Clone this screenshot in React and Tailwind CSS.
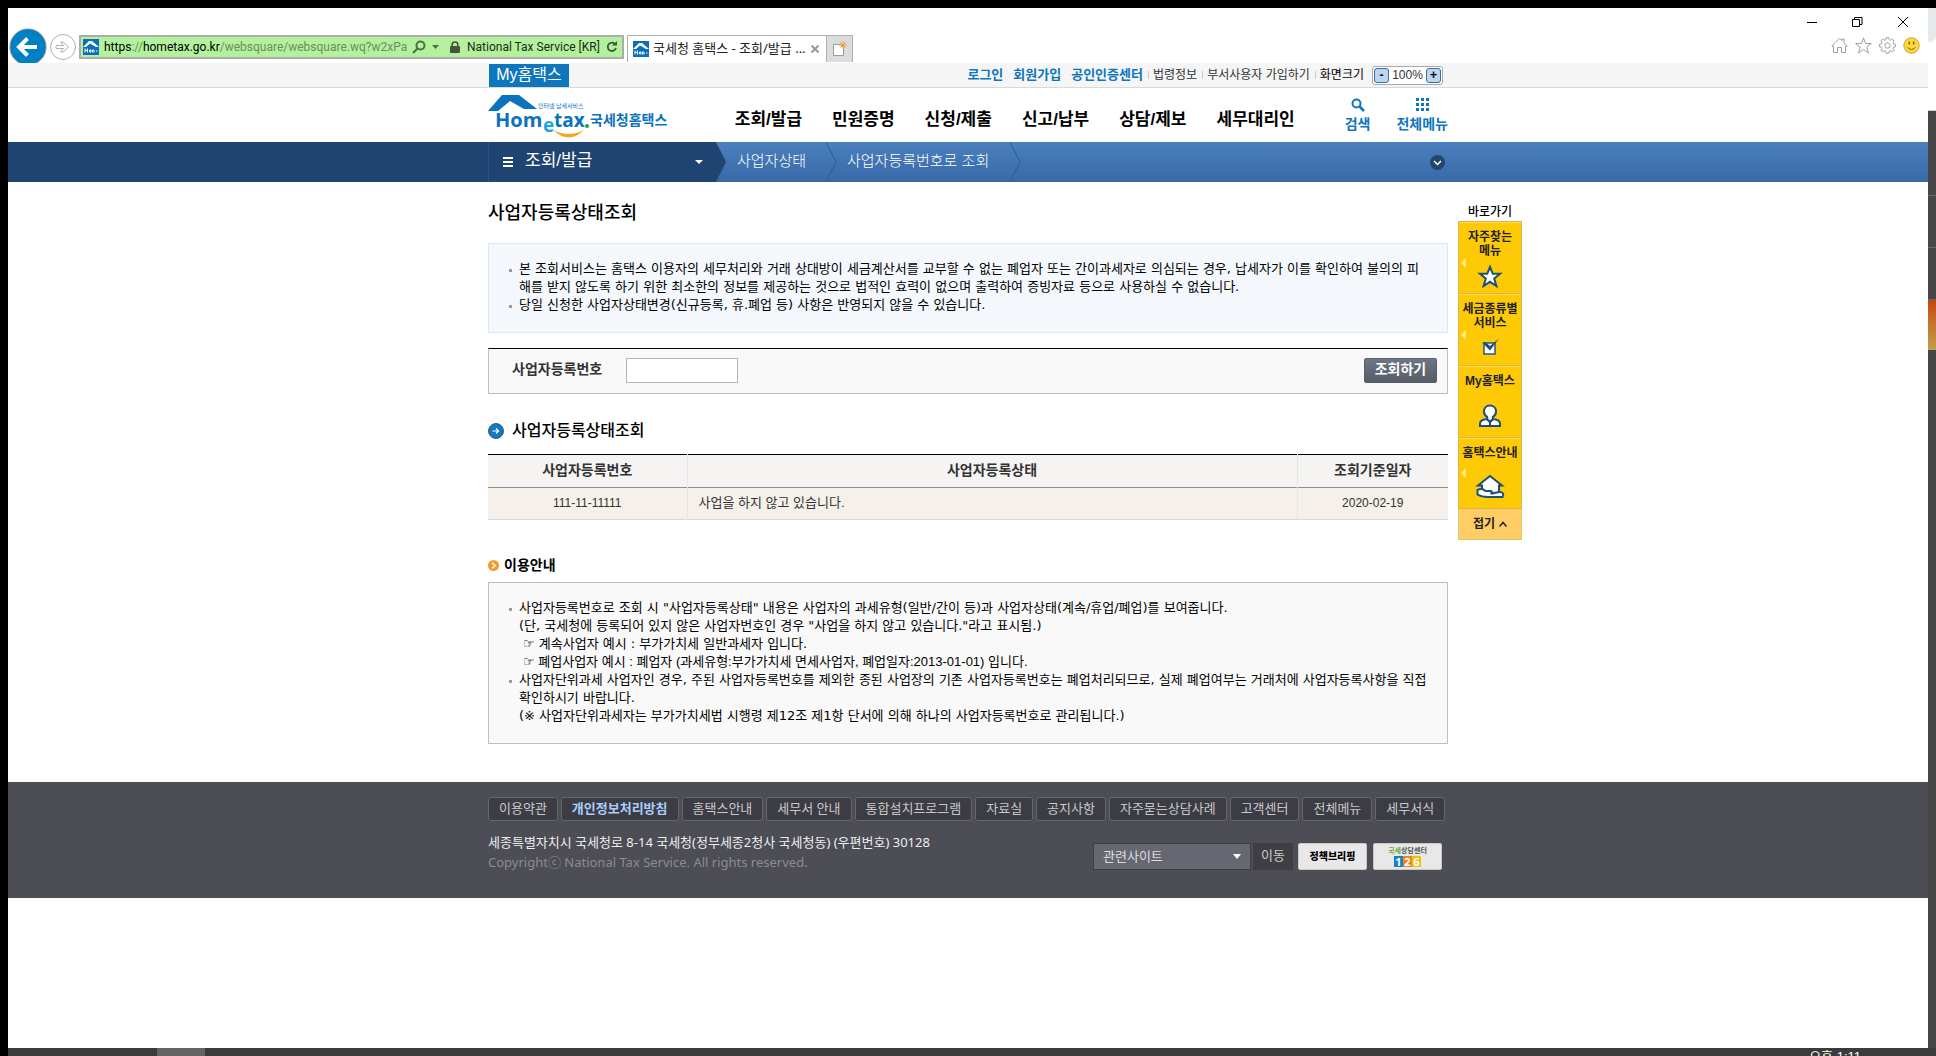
import React from "react";

const NAV = ["조회/발급", "민원증명", "신청/제출", "신고/납부", "상담/제보", "세무대리인"];

const FOOTER_LINKS = [
  "이용약관",
  "개인정보처리방침",
  "홈택스안내",
  "세무서 안내",
  "통합설치프로그램",
  "자료실",
  "공지사항",
  "자주묻는상담사례",
  "고객센터",
  "전체메뉴",
  "세무서식",
];

function Favicon() {
  return (
    <svg width="16" height="16" viewBox="0 0 16 16" className="shrink-0" aria-hidden="true">
      <rect width="16" height="16" fill="#0a6ebd" />
      <path d="M0 8 L6 2 L9 2 L16 8 L13 8 L7 4.5 L3 8 Z" fill="#fff" />
      <path d="M2 9.500v4M4.500 9.500v4M2 11.500h2.500M6.500 11h1.500v2h-1.500zM9.500 13.500v-2.500h1.500v2.500M13 12h1.500" stroke="#fff" fill="none" />
    </svg>
  );
}

function BrowserChrome() {
  return (
    <div className="flex h-[55px] justify-between overflow-hidden bg-white text-[#222]">
      <div className="flex items-start pt-[20px]">
        <button aria-label="뒤로" className="ml-px">
          <svg width="38" height="38" viewBox="0 0 38 38">
            <circle cx="19" cy="19" r="18" fill="#0080c4" stroke="#7b8b95" />
            <path d="M10 19h18M18.500 10.500L10 19l8.500 8.500" fill="none" stroke="#fff" strokeWidth="4" />
          </svg>
        </button>
        <button aria-label="앞으로" className="ml-[2px] mt-[5px]">
          <svg width="28" height="28" viewBox="0 0 28 28">
            <circle cx="14" cy="14" r="12.500" fill="#fff" stroke="#b0b0b0" />
            <path d="M7 12.500h7.500l-3-3.500h2.500l5.500 5-5.500 5h-2.500l3-3.500H7z" fill="#fff" stroke="#b0b0b0" />
          </svg>
        </button>
        <div className="ml-[2px] mt-[7px] flex h-6 w-[545px] items-center border-2 border-[#acacac] bg-[#b3f19c] pl-[2px] pr-1 font-[Roboto,sans-serif] text-[12px]">
          <Favicon />
          <span className="ml-[5px] w-[302px] whitespace-nowrap text-[#6f8b66]">
            <span className="text-black">https</span>://<span className="text-black">hometax.go.kr</span>
            /websquare/websquare.wq?w2xPa
          </span>
          <svg width="14" height="14" viewBox="0 0 14 14" className="ml-[6px] shrink-0">
            <circle cx="8.500" cy="5.500" r="4" fill="none" stroke="#4f6f45" strokeWidth="2" />
            <path d="M5.500 8.500L1 13" stroke="#4f6f45" strokeWidth="2.200" />
          </svg>
          <svg width="7" height="4" viewBox="0 0 7 4" className="ml-[6px] shrink-0">
            <path d="M0 0h7L3.500 4z" fill="#4f6f45" />
          </svg>
          <svg width="10" height="12" viewBox="0 0 10 12" className="ml-[11px] shrink-0">
            <path d="M2.200 6V3.500a2.800 2.500 0 015.600 0V6" fill="none" stroke="#44553f" strokeWidth="1.600" />
            <rect y="5" width="10" height="7" rx="1" fill="#44553f" />
          </svg>
          <span className="ml-[7px] w-[136px] whitespace-nowrap text-[#1d2b1a]">National Tax Service [KR]</span>
          <svg width="12" height="12" viewBox="0 0 12 12" className="ml-[5px] shrink-0">
            <path d="M9.500 3.500A4.200 4.200 0 1010 7" fill="none" stroke="#3c5a33" strokeWidth="1.800" />
            <path d="M6 4.500h5V0z" fill="#3c5a33" />
          </svg>
        </div>
        <div className="ml-[3px] mt-[7px] flex h-[27px] w-[200px] items-center border border-b-0 border-[#b0b0b0] bg-white pl-[5px] text-[13px]">
          <Favicon />
          <span className="ml-1 w-[156px] whitespace-nowrap">국세청 홈택스 - 조회/발급 ...</span>
          <svg width="8" height="8" viewBox="0 0 8 8" className="ml-[2px] shrink-0">
            <path d="M.5.5l7 7M7.500.5l-7 7" stroke="#999" strokeWidth="2" />
          </svg>
        </div>
        <button aria-label="새 탭" className="-ml-px mt-[7px] flex h-[27px] w-[27px] items-center justify-center border border-b-0 border-[#b0b0b0] bg-[#dcdcdc]">
          <svg width="16" height="16" viewBox="0 0 16 16">
            <path d="M1.500 3.500h7l3 3v8h-10z" fill="#fff" stroke="#999" />
            <path d="M11 0v8M7 4h8M8.200 1.200l5.600 5.600M13.800 1.200L8.200 6.800" stroke="#f0a030" />
          </svg>
        </button>
      </div>
      <div className="flex flex-col items-end pr-2">
        <div className="flex gap-[35px] pr-3 pt-[9px]">
          <button aria-label="최소화">
            <svg width="10" height="10" viewBox="0 0 10 10"><path d="M0 5.500h10" stroke="#000" /></svg>
          </button>
          <button aria-label="복원">
            <svg width="11" height="10" viewBox="0 0 11 10"><path d="M.5 2.500h7v7h-7zM2.500 2V.5h7.500v7H8" fill="none" stroke="#000" /></svg>
          </button>
          <button aria-label="닫기">
            <svg width="10" height="10" viewBox="0 0 10 10"><path d="M0 0l10 10M10 0L0 10" stroke="#000" /></svg>
          </button>
        </div>
        <div className="mt-[10px] flex items-center gap-[7px]">
          <svg width="17" height="17" viewBox="0 0 17 17" fill="none" stroke="#a0a0a0">
            <path d="M.8 9L8.500 1.200 11 3.700V2h2v3.700L16.200 9l-1.200.8-.5-.5v6.200h-4v-5h-4v5h-4V9.300l-.5.5z" />
          </svg>
          <svg width="17" height="17" viewBox="0 0 17 17" fill="none" stroke="#a0a0a0">
            <path d="M8.500.8l2 5.700h5.900l-4.700 3.700 1.800 5.800-5-3.500-5 3.500 1.800-5.800L.6 6.500h5.900z" />
          </svg>
          <svg width="17" height="17" viewBox="0 0 17 17" fill="none" stroke="#a0a0a0">
            <path d="M7 .8h3l.4 2 1.300.5 1.700-1.200 1.600 1.600L14 5.500l.5 1.300 1.900.4v2.600l-1.900.4-.5 1.300 1.100 1.700-1.700 1.700-1.700-1.200-1.300.5-.4 2H7l-.4-2-1.300-.5-1.700 1.200L2 13.300l1-1.800-.5-1.300-1.900-.4V7.200l1.900-.4L3 5.500 2 3.800l1.700-1.700 1.700 1.200 1.300-.5z" />
            <circle cx="8.500" cy="8.500" r="2.700" />
          </svg>
          <svg width="17" height="17" viewBox="0 0 17 17">
            <circle cx="8.500" cy="8.500" r="7.700" fill="#ffd83d" stroke="#c9a227" />
            <path d="M6.300 4.500v3M10.700 4.500v3" stroke="#7a6420" strokeWidth="1.600" />
            <path d="M4.500 10.500q4 3.800 8 0" fill="none" stroke="#7a6420" />
          </svg>
        </div>
      </div>
    </div>
  );
}

function Logo() {
  return (
    <svg width="182" height="46" viewBox="0 0 182 46" role="img" aria-label="Hometax 국세청홈택스">
      <path d="M0 18L14 2h17l18 14H36L22 8 10 18z" fill="#0b72bd" />
      <text x="7" y="34" fontSize="20" fontWeight="700" fill="#0b72bd" fontFamily="Open Sans, sans-serif">
        Hom
      </text>
      <text x="55" y="39" fontSize="19" fontWeight="700" fill="#1fa4e0" fontFamily="Open Sans, sans-serif">
        e
      </text>
      <text x="66" y="34" fontSize="19" fontWeight="700" fill="#0b72bd" fontFamily="Open Sans, sans-serif">
        tax
      </text>
      <circle cx="99" cy="33" r="2" fill="#13a44a" />
      <path d="M65 37q16 8 31 0q-15 15-31 0z" fill="#f8a51b" />
      <text x="50" y="15" fontSize="6" fill="#0b72bd" fontFamily="Noto Sans CJK KR, sans-serif">
        인터넷 납세서비스
      </text>
      <text x="102" y="32" fontSize="14" fontWeight="700" fill="#0b72bd" fontFamily="Noto Sans CJK KR, sans-serif">
        국세청홈택스
      </text>
    </svg>
  );
}

function UtilityBar() {
  return (
    <div className="border-b border-[#d9d9d9] bg-[#f5f5f5]">
      <div className="mx-auto flex h-6 w-full max-w-[960px] items-center justify-between">
        <a href="#my" className="ml-px flex h-[23px] w-20 items-center justify-center self-end bg-[#0e76bc] pb-px text-[16px] leading-5 text-white">
          My홈택스
        </a>
        <div className="mr-[5px] flex items-center whitespace-nowrap text-[12px] leading-4 text-[#333]">
          <div className="mr-[5px] flex gap-[10px] text-[13px] font-bold text-[#0e76bc]">
            <a href="#login">로그인</a>
            <a href="#join">회원가입</a>
            <a href="#cert">공인인증센터</a>
          </div>
          <a href="#law" className="flex items-center before:mr-[4px] before:h-2 before:w-px before:bg-[#ccc]">법령정보</a>
          <a href="#dept" className="ml-[5px] flex items-center before:mr-[4px] before:h-2 before:w-px before:bg-[#ccc]">부서사용자 가입하기</a>
          <span className="ml-[5px] flex items-center text-black before:mr-[4px] before:h-2 before:w-px before:bg-[#ccc]">화면크기</span>
          <div className="ml-2 flex h-[19px] w-[71px] items-center justify-between rounded-[3px] border border-[#aaa] bg-white px-px">
            <button aria-label="축소" className="h-[15px] w-[15px] rounded-[3px] border border-[#3b6ea5] bg-[#bcd6ee] text-[12px] font-bold leading-3 text-black">-</button>
            <span>100%</span>
            <button aria-label="확대" className="h-[15px] w-[15px] rounded-[3px] border border-[#3b6ea5] bg-[#bcd6ee] text-[12px] font-bold leading-3 text-black">+</button>
          </div>
        </div>
      </div>
    </div>
  );
}

function Header() {
  return (
    <header className="mx-auto flex h-[54px] w-full max-w-[960px] justify-between">
      <a href="#home" className="pt-[5px]">
        <Logo />
      </a>
      <nav className="ml-auto mr-[50px] flex gap-[30px] whitespace-nowrap pt-[20px] text-[17px] font-bold leading-6 text-black">
        {NAV.map((item) => (
          <a key={item} href="#menu">{item}</a>
        ))}
      </nav>
      <div className="flex gap-[26px] whitespace-nowrap pt-[10px] text-[14px] font-bold leading-5 text-[#0e76bc]">
        <button className="flex flex-col items-center">
          <svg width="14" height="14" viewBox="0 0 14 14">
            <circle cx="5.500" cy="5.500" r="4" fill="none" stroke="#0e76bc" strokeWidth="2" />
            <path d="M8.500 8.500l4.500 4.500" stroke="#0e76bc" strokeWidth="2.500" />
          </svg>
          <span className="mt-[2px]">검색</span>
        </button>
        <button className="flex flex-col items-center">
          <svg width="13" height="14" viewBox="0 0 13 14" fill="#0e76bc">
            <path d="M0 0h3v3H0zM5 0h3v3H5zM10 0h3v3h-3zM0 5h3v3H0zM5 5h3v3H5zM10 5h3v3h-3zM0 10h3v3H0zM5 10h3v3H5zM10 10h3v3h-3z" />
          </svg>
          <span className="mt-[2px]">전체메뉴</span>
        </button>
      </div>
    </header>
  );
}

function Chevron() {
  return (
    <svg width="11" height="40" viewBox="0 0 11 40" aria-hidden="true">
      <path d="M0 0l10 20L0 40" fill="none" stroke="#265f9c" />
    </svg>
  );
}

function Breadcrumb() {
  return (
    <nav className="grid grid-cols-[1fr_minmax(0,960px)_1fr] bg-linear-to-b from-[#4c80be] to-[#3868a7]">
      <div className="bg-[#204472]" />
      <div className="flex h-10 items-center whitespace-nowrap text-white">
        <button className="flex h-10 w-[228px] items-center border-l border-[#2a5286] bg-[#204472] pl-[14px] pr-[13px] text-[17px] leading-6">
          <svg width="10" height="10" viewBox="0 0 10 10">
            <path d="M0 1h10M0 5h10M0 9h10" stroke="#fff" strokeWidth="2" />
          </svg>
          <span className="ml-3 pb-[2px]">조회/발급</span>
          <svg width="8" height="4" viewBox="0 0 8 4" className="ml-auto">
            <path d="M0 0h8L4 4z" fill="#fff" />
          </svg>
        </button>
        <svg width="11" height="40" viewBox="0 0 11 40" aria-hidden="true">
          <path d="M0 0l10 20L0 40z" fill="#204472" />
        </svg>
        <a href="#status" className="ml-[10px] mr-5 pb-[2px] text-[15px] font-light">사업자상태</a>
        <Chevron />
        <a href="#number" className="ml-[10px] mr-[21px] pb-[2px] text-[15px] font-light">사업자등록번호로 조회</a>
        <Chevron />
        <button aria-label="펼치기" className="ml-auto mr-[3px]">
          <svg width="15" height="15" viewBox="0 0 15 15">
            <circle cx="7.500" cy="7.500" r="7.500" fill="#24466d" />
            <path d="M4 6l3.500 3.500L11 6" fill="none" stroke="#fff" strokeWidth="1.500" />
          </svg>
        </button>
      </div>
    </nav>
  );
}

function BulletItem({ children }) {
  return (
    <li className="flex gap-[7px] before:mt-[9px] before:h-[3px] before:w-[3px] before:shrink-0 before:bg-[#999]">
      <div>{children}</div>
    </li>
  );
}

const QUICK_ICONS = {
  star: (
    <path d="M11 1l2.800 6.800h7.200l-5.800 4.700 2.200 7.500L11 15.800 4.600 20l2.200-7.500L1 7.800h7.200z" fill="#fff" stroke="#1c4f7c" strokeWidth="2" />
  ),
  check: (
    <>
      <rect x="5" y="5" width="11" height="11" fill="#fff" stroke="#1c4f7c" strokeWidth="1.400" />
      <path d="M3 4.500l4 0 4 3.500L20 .5l-9 12z" fill="#1c4f7c" />
    </>
  ),
  person: (
    <>
      <path d="M1 21v-2.500c0-3 3-4 7-4.500l3 3 3-3c4 .5 7 1.500 7 4.500V21zM11 17v3" fill="#fff" stroke="#1c4f7c" strokeWidth="2" />
      <path d="M11 .5C7.500.5 5 3 5 6.500c0 2.500 1.300 4.500 3.200 5.500v2.200l2.800 2.600 2.800-2.600V12C15.700 11 17 9 17 6.500 17 3 14.500.5 11 .5z" fill="#fff" stroke="#1c4f7c" strokeWidth="2" />
    </>
  ),
  house: (
    <>
      <path d="M-1 9.500L11 0l12 9.500h-3V18H3V9.500z" fill="#fff" stroke="#1c4f7c" strokeWidth="2" />
      <path d="M-1.500 14c3-1.500 6-1 8 1h5c2 0 2 2 0 2.500 4 0 6-1.500 9-1.500 4 0 4.500 2.500 3 5H9c-5 0-8-1-10.500-2.500z" fill="#fff" stroke="#1c4f7c" strokeWidth="2" />
    </>
  ),
};

function QuickItem({ icon, arrow, children }) {
  return (
    <a href="#quick" className="flex h-[72px] flex-col items-center border-b border-[#e0b04a] pt-2 shadow-[inset_0_1px_0_#ffdb4d] last:h-[71px]">
      <span className="text-center text-[12px] font-bold leading-[14px] text-[#222]">{children}</span>
      <span className="mt-auto flex w-full items-end pb-[6px]">
        <span className="w-5 pb-6 pl-[2px]">
          {arrow && (
            <svg width="5" height="10" viewBox="0 0 5 10"><path d="M5 0v10L0 5z" fill="#ffec80" /></svg>
          )}
        </span>
        <svg width="22" height="26" viewBox="0 0 22 26" className="overflow-visible">{QUICK_ICONS[icon]}</svg>
      </span>
    </a>
  );
}

function QuickMenu() {
  return (
    <aside className="ml-[10px] w-16 whitespace-nowrap pt-[21px]">
      <h2 className="text-center text-[12px] font-medium leading-[18px] text-black">바로가기</h2>
      <div className="border border-b-0 border-[#e0b04a] bg-[#fdca05]">
        <QuickItem icon="star" arrow>자주찾는<br />메뉴</QuickItem>
        <QuickItem icon="check" arrow>세금종류별<br />서비스</QuickItem>
        <QuickItem icon="person">My홈택스</QuickItem>
        <QuickItem icon="house" arrow>홈택스안내</QuickItem>
      </div>
      <button className="flex h-[31px] w-16 items-center justify-center gap-1 border border-t-0 border-[#d8cc6a] bg-[#ffcc66] pb-px text-[12px] font-bold text-[#222]">
        접기
        <svg width="8" height="6" viewBox="0 0 8 6"><path d="M.5 5.500L4 1.500l3.500 4" fill="none" stroke="#222" strokeWidth="1.500" /></svg>
      </button>
    </aside>
  );
}

function StatusPage() {
  return (
    <main className="pb-[38px] pt-[17px] text-[13px] leading-[18px] text-black">
      <h1 className="text-[18px] font-medium leading-7">사업자등록상태조회</h1>
      <ul className="mt-4 border border-[#dde7f0] bg-[#f4f7fc] pb-[18px] pl-5 pr-2 pt-4 font-['DejaVu_Sans','Noto_Sans_CJK_KR',sans-serif]">
        <BulletItem>
          본 조회서비스는 홈택스 이용자의 세무처리와 거래 상대방이 세금계산서를 교부할 수 없는 폐업자 또는 간이과세자로 의심되는 경우, 납세자가 이를 확인하여 불의의 피<br />
          해를 받지 않도록 하기 위한 최소한의 정보를 제공하는 것으로 법적인 효력이 없으며 출력하여 증빙자료 등으로 사용하실 수 없습니다.
        </BulletItem>
        <BulletItem>당일 신청한 사업자상태변경(신규등록, 휴.폐업 등) 사항은 반영되지 않을 수 있습니다.</BulletItem>
      </ul>
      <form className="mt-[15px] flex items-center border border-[#bfbfbf] border-t-black bg-[#f9f9f9] pb-[10px] pl-[23px] pr-[10px] pt-[9px]" onSubmit={(e) => e.preventDefault()}>
        <label htmlFor="bizno" className="w-[114px] pb-[3px] text-[14px] font-bold text-[#333]">사업자등록번호</label>
        <input id="bizno" className="h-[25px] w-[112px] border border-[#b5b5b5] bg-white px-1" />
        <button className="ml-auto h-[25px] w-[73px] rounded-[2px] border border-[#565e6b] bg-linear-to-b from-[#6d7685] to-[#575c68] pb-[3px] text-[14px] font-bold leading-4 text-white">
          조회하기
        </button>
      </form>
      <h2 className="mt-[25px] flex items-center gap-2 text-[16px] font-medium leading-6">
        <svg width="16" height="16" viewBox="0 0 16 16">
          <circle cx="8" cy="8" r="7.500" fill="#1678bd" stroke="#2d5f86" />
          <path d="M4.500 8h6M8 5.500L10.500 8 8 10.500" fill="none" stroke="#fff" strokeWidth="1.200" />
        </svg>
        사업자등록상태조회
      </h2>
      <table className="mt-[11px] w-full table-fixed border-collapse border-b border-t border-b-[#d9d9d9] border-t-black text-[#333]">
        <thead>
          <tr className="h-[33px] border-b border-[#8f8f8f] bg-[#f5f4f3] text-[14px]">
            <th className="w-[199px] border-r border-[#e5e5e5] border-b-[#8f8f8f] pb-[3px]">사업자등록번호</th>
            <th className="border-r border-[#e5e5e5] border-b-[#8f8f8f] pb-[3px]">사업자등록상태</th>
            <th className="w-[151px] pb-[3px]">조회기준일자</th>
          </tr>
        </thead>
        <tbody>
          <tr className="h-8 bg-[#f5f0ea]">
            <td className="border-r border-[#e5e5e5] pb-[2px] text-center text-[12px]">111-11-11111</td>
            <td className="border-r border-[#e5e5e5] pb-[2px] pl-[11px]">사업을 하지 않고 있습니다.</td>
            <td className="pb-[2px] text-center text-[12px]">2020-02-19</td>
          </tr>
        </tbody>
      </table>
      <h2 className="mt-[35px] flex items-center gap-[5px] text-[14px] font-bold leading-5">
        <svg width="11" height="11" viewBox="0 0 11 11">
          <circle cx="5.500" cy="5.500" r="5.500" fill="#f79a2e" />
          <path d="M4.200 2.700L7 5.500 4.200 8.300" fill="none" stroke="#fff" strokeWidth="1.600" />
        </svg>
        이용안내
      </h2>
      <ul className="mt-[7px] border border-[#bfbfbf] bg-[#f9f9f9] pb-[18px] pl-5 pr-2 pt-4 font-['DejaVu_Sans','Noto_Sans_CJK_KR',sans-serif]">
        <BulletItem>
          사업자등록번호로 조회 시 "사업자등록상태" 내용은 사업자의 과세유형(일반/간이 등)과 사업자상태(계속/휴업/폐업)를 보여줍니다.<br />
          (단, 국세청에 등록되어 있지 않은 사업자번호인 경우 "사업을 하지 않고 있습니다."라고 표시됨.)
          <p className="pl-1">☞ 계속사업자 예시 : 부가가치세 일반과세자 입니다.</p>
          <p className="pl-1 font-['Liberation_Sans','Noto_Sans_CJK_KR',sans-serif]">
            <span className="font-['DejaVu_Sans',sans-serif]">☞</span> 폐업사업자 예시 : 폐업자 (과세유형:부가가치세 면세사업자, 폐업일자:2013-01-01) 입니다.
          </p>
        </BulletItem>
        <BulletItem>
          사업자단위과세 사업자인 경우, 주된 사업자등록번호를 제외한 종된 사업장의 기존 사업자등록번호는 폐업처리되므로, 실제 폐업여부는 거래처에 사업자등록사항을 직접<br />
          확인하시기 바랍니다.<br />
          (※ 사업자단위과세자는 부가가치세법 시행령 제12조 제1항 단서에 의해 하나의 사업자등록번호로 관리됩니다.)
        </BulletItem>
      </ul>
    </main>
  );
}

function Footer() {
  return (
    <footer className="bg-[#4d4d55] font-['Noto_Sans','Noto_Sans_CJK_KR',sans-serif]">
      <div className="mx-auto h-[116px] w-full max-w-[960px] whitespace-nowrap pt-[15px] text-[13px]">
        <ul className="flex gap-[3px]">
          {FOOTER_LINKS.map((label, i) => (
            <li key={label}>
              <a
                href="#footer"
                className={
                  "flex h-6 items-center rounded-[3px] border border-[#66666b] bg-[#3c3c44] px-[10px] pb-px " +
                  (i === 1 ? "font-bold text-[#a9cdf8]" : "text-[#c8c8c8]")
                }
              >
                {label}
              </a>
            </li>
          ))}
        </ul>
        <div className="mr-[6px] flex justify-between">
          <div className="pt-[11px] leading-5">
            <p className="text-[#eee]">세종특별자치시 국세청로 8-14 국세청(정부세종2청사 국세청동) (우편번호) 30128</p>
            <p className="text-[#8c8c8e]">Copyrightⓒ National Tax Service. All rights reserved.</p>
          </div>
          <div className="mt-[22px] flex h-[27px]">
            <div className="relative">
              <select aria-label="관련사이트" className="h-[27px] w-[158px] appearance-none border border-[#3f3f46] bg-[#676772] pl-[9px] text-[#ddd]">
                <option>관련사이트</option>
              </select>
              <svg width="8" height="5" viewBox="0 0 8 5" className="pointer-events-none absolute right-[10px] top-[11px]">
                <path d="M0 0h8L4 5z" fill="#fff" />
              </svg>
            </div>
            <button className="ml-[2px] w-10 bg-[#3f3e43] pb-px text-[#ccc]">이동</button>
            <a href="#briefing" className="ml-[5px] flex w-[69px] items-center justify-center rounded-[2px] border border-[#c8c8c8] bg-[#e8e8e8] text-[10px] font-black text-black">
              정책브리핑
            </a>
            <a href="#call" className="ml-[6px] flex w-[69px] flex-col items-center justify-center rounded-[2px] border border-[#c8c8c8] bg-[#e8e8e8] text-[7px] font-bold leading-[10px] text-[#555]">
              <span><span className="text-[#6cab3c]">국세</span>상담센터</span>
              <span className="flex text-[11px] leading-[11px] text-white">
                <span className="w-[9px] bg-[#1583c6] text-center">1</span>
                <span className="w-[9px] bg-[#f08421] text-center">2</span>
                <span className="w-[9px] bg-[#efc20f] text-center">6</span>
              </span>
            </a>
          </div>
        </div>
      </div>
    </footer>
  );
}

function DesktopStrip() {
  return (
    <div className="flex w-2 shrink-0 flex-col bg-[#474747]" aria-hidden="true">
      <div className="bg-white">
        <div className="h-[34px] rounded-br-[6px] bg-[#e6e9ec]" />
        <div className="h-[69px] border-b border-[#ccc]" />
      </div>
      <div className="h-[85px] border-b border-[#6a6a6a]" />
      <div className="h-[52px] border-b border-[#6a6a6a]" />
      <div className="h-[52px] border-b border-[#6a6a6a]" />
      <div className="h-[50px] bg-linear-to-b from-[#c4460c] to-[#bfa04a]" />
    </div>
  );
}

export default function App() {
  return (
    <div className="flex min-h-screen flex-col bg-black font-['Liberation_Sans','Noto_Sans_CJK_KR',sans-serif]">
      <div className="flex grow pl-2 pt-2">
        <div className="flex min-w-0 grow flex-col bg-white">
          <div className="font-['Noto_Sans','Noto_Sans_CJK_KR',sans-serif]">
            <BrowserChrome />
          </div>
          <UtilityBar />
          <Header />
          <Breadcrumb />
          <div className="grid grid-cols-[1fr_minmax(0,960px)_1fr]">
            <div />
            <StatusPage />
            <QuickMenu />
          </div>
          <Footer />
        </div>
        <DesktopStrip />
      </div>
      <div className="ml-2 flex h-2 overflow-hidden bg-[#3b3b3b] pl-[149px] text-white">
        <div className="w-12 bg-[#646464]" />
        <span className="ml-auto mr-[75px] pt-[2px] text-[13px] leading-[14px]">오후 1:11</span>
      </div>
    </div>
  );
}
